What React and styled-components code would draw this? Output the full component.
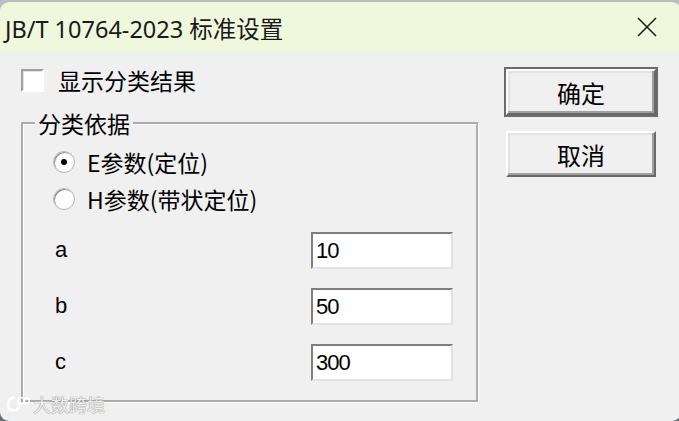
import React from "react";
import styled, { createGlobalStyle } from "styled-components";

const GlobalStyle = createGlobalStyle`
  html, body {
    margin: 0;
    padding: 0;
  }
  body {
    width: 679px;
    height: 421px;
    overflow: hidden;
    font-family: "Noto Sans", "Noto Sans CJK SC", sans-serif;
  }
`;

const Desktop = styled.div`
  width: 679px;
  height: 421px;
  padding-top: 2px;
  box-sizing: border-box;
  background: linear-gradient(#b9bec5, #b9bec5 30%, #6d6f73);
  overflow: hidden;
`;

const Window = styled.div`
  position: relative;
  width: 681px;
  height: 419px;
  border-radius: 9px;
  background: #f0f0f0;
  overflow: hidden;
  box-shadow: inset 0 1px 0 #9ba2ab;
`;

const TitleBar = styled.div`
  height: 50px;
  display: flex;
  align-items: center;
  justify-content: space-between;
  padding: 0 24px 0 5px;
  background: #eff7dc;
`;

const Title = styled.div`
  font-size: 23.5px;
  color: #1a1a1a;
  padding-top: 2px;
`;

const Close = styled.div`
  width: 20px;
  height: 20px;
  display: flex;
`;

const Body = styled.div`
  display: flex;
  padding: 17px 0 0 21px;
  font-family: "Noto Sans CJK SC", sans-serif;
  color: #000;
`;

const LeftCol = styled.div`
  width: 458px;
  display: flex;
  flex-direction: column;
`;

const RightCol = styled.div`
  margin-left: 27px;
  display: flex;
  flex-direction: column;
  gap: 16px;
`;

const CheckRow = styled.label`
  display: flex;
  align-items: center;
  height: 23px;
  gap: 14px;
  font-size: 23px;
  line-height: 23px;
`;

const CheckBox = styled.span`
  width: 19px;
  height: 19px;
  background: #fff;
  border: 2px solid;
  border-color: #a0a0a0 #fff #fff #a0a0a0;
  box-shadow: inset 1px 1px 0 #e3e3e3;
`;

const Group = styled.fieldset`
  margin: 18px 0 0;
  padding: 7px 0 10px;
  border: 3px groove #fff;
  min-width: 0;
  height: 293px;
  box-sizing: border-box;
`;

const Legend = styled.legend`
  margin-left: 11px;
  padding: 0 3px;
  font-size: 23px;
  line-height: 26px;
`;

const RadioList = styled.div``;

const RadioRow = styled.div`
  display: flex;
  align-items: center;
  height: 37px;
  padding-left: 29px;
  gap: 12px;
  font-size: 23px;
`;

const Radio = styled.span`
  position: relative;
  width: 20px;
  height: 20px;
  border-radius: 50%;
  background: #fff;
  border: 1px solid #b4b4b4;
  box-shadow: inset 1px 1px 0 #8c8c8c;
  &::after {
    content: "";
    display: ${(p) => (p.$checked ? "block" : "none")};
    position: absolute;
    left: 7px;
    top: 7px;
    width: 6px;
    height: 6px;
    border-radius: 50%;
    background: #000;
  }
`;

const ParamList = styled.div`
  margin-top: 5px;
`;

const ParamRow = styled.div`
  display: flex;
  align-items: center;
  height: 56px;
  padding-left: 31px;
`;

const ParamLabel = styled.span`
  width: 256px;
  font-family: "Liberation Sans", Arial, sans-serif;
  font-size: 22px;
`;

const Input = styled.div`
  width: 135px;
  height: 33px;
  background: #fff;
  border: 2px solid;
  border-color: #7f7f7f #e3e3e3 #e3e3e3 #7f7f7f;
  font-family: "Liberation Sans", Arial, sans-serif;
  font-size: 22px;
  line-height: 34px;
  padding-left: 3px;
  box-sizing: content-box;
  letter-spacing: -1px;
`;

const Button = styled.button`
  width: 150px;
  height: 46px;
  background: #f0f0f0;
  font-family: "Noto Sans CJK SC", sans-serif;
  font-size: 24px;
  color: #000;
  padding: 0;
  border: 2px solid;
  border-color: #fff #696969 #696969 #fff;
  box-shadow: ${(p) =>
    p.$default
      ? "0 0 0 2px #6b6b6b, inset -2px -2px 0 #a0a0a0, inset 2px 2px 0 #e3e3e3"
      : "inset -2px -2px 0 #a0a0a0, inset 2px 2px 0 #e3e3e3"};
`;

const Watermark = styled.div`
  position: absolute;
  left: 6px;
  bottom: 4px;
  display: flex;
  align-items: center;
  gap: 3px;
  font-family: "Noto Sans CJK SC", sans-serif;
  font-size: 18px;
  color: rgba(255, 255, 255, 0.9);
  text-shadow: 0 0 1px #8a8a8a, 0 0 1px #8a8a8a;
`;

export default function App() {
  return (
    <>
      <GlobalStyle />
      <Desktop>
        <Window>
          <TitleBar>
            <Title>JB/T 10764-2023 标准设置</Title>
            <Close>
              <svg width="20" height="20" viewBox="0 0 20 20">
                <path d="M1 1L19 19M19 1L1 19" stroke="#1a1a1a" strokeWidth="1.5" />
              </svg>
            </Close>
          </TitleBar>
          <Body>
            <LeftCol>
              <CheckRow>
                <CheckBox />
                显示分类结果
              </CheckRow>
              <Group>
                <Legend>分类依据</Legend>
                <RadioList>
                  <RadioRow>
                    <Radio $checked />
                    E参数(定位)
                  </RadioRow>
                  <RadioRow>
                    <Radio />
                    H参数(带状定位)
                  </RadioRow>
                </RadioList>
                <ParamList>
                  <ParamRow>
                    <ParamLabel>a</ParamLabel>
                    <Input>10</Input>
                  </ParamRow>
                  <ParamRow>
                    <ParamLabel>b</ParamLabel>
                    <Input>50</Input>
                  </ParamRow>
                  <ParamRow>
                    <ParamLabel>c</ParamLabel>
                    <Input>300</Input>
                  </ParamRow>
                </ParamList>
              </Group>
            </LeftCol>
            <RightCol>
              <Button $default>确定</Button>
              <Button>取消</Button>
            </RightCol>
          </Body>
          <Watermark>
            <svg width="24" height="18" viewBox="0 0 22 16">
              <path d="M8 2C3 2 2 6 2 9c0 3 2 5 5 5 3 0 5-2 5-4" fill="none" stroke="#fff" strokeWidth="2.2" />
              <circle cx="14" cy="5" r="3" fill="none" stroke="#fff" strokeWidth="1.5" />
              <circle cx="19" cy="5" r="2.5" fill="none" stroke="#fff" strokeWidth="1.5" />
            </svg>
            大数跨境
          </Watermark>
        </Window>
      </Desktop>
    </>
  );
}
